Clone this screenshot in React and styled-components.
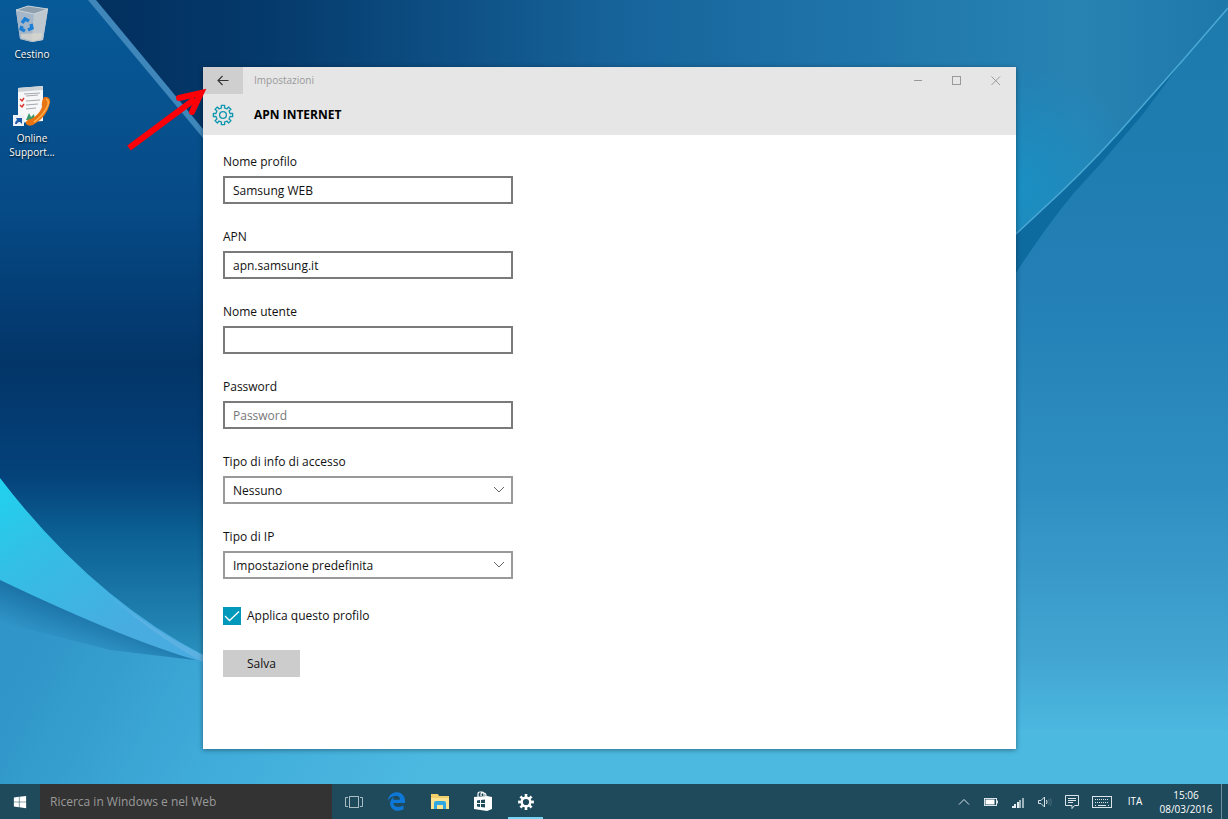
import { useState } from "react";
import styled, { createGlobalStyle } from "styled-components";
import { FaEdgeLegacy, FaWindows } from "react-icons/fa";

const GlobalStyle = createGlobalStyle`
  * {
    box-sizing: border-box;
  }
  body {
    margin: 0;
    overflow: hidden;
  }
  body, button, input, select {
    font-family: "Open Sans", "Noto Sans", sans-serif;
    font-size: 12px;
  }
`;

// closed outline of a cog centred on 0,0
const gearPath = (teeth, outer, inner) => {
  const step = (Math.PI * 2) / teeth;
  const points = [];
  for (let i = 0; i < teeth; i++) {
    const a = i * step - Math.PI / 2;
    [
      [-0.27, inner],
      [-0.22, outer],
      [0.22, outer],
      [0.27, inner],
    ].forEach(([t, r]) => {
      const x = Math.cos(a + t * step) * r;
      const y = Math.sin(a + t * step) * r;
      points.push(`${x.toFixed(2)} ${y.toFixed(2)}`);
    });
  }
  return `M${points.join("L")}Z`;
};

const Background = () => (
  <Wallpaper viewBox="0 0 1228 819" preserveAspectRatio="none" aria-hidden="true">
    <defs>
      <linearGradient id="sky" x1="0" y1="0" x2="1" y2="0">
        <stop offset="0.08" stopColor="#02305f" />
        <stop offset="0.22" stopColor="#053a6c" />
        <stop offset="0.5" stopColor="#16639a" />
        <stop offset="0.7" stopColor="#1f75a9" />
        <stop offset="0.88" stopColor="#2883b3" />
        <stop offset="1" stopColor="#1e78aa" />
      </linearGradient>
      <linearGradient id="left" x1="0" y1="0" x2="0" y2="1">
        <stop offset="0" stopColor="#075a98" />
        <stop offset="0.3" stopColor="#064a86" />
        <stop offset="0.52" stopColor="#033568" />
        <stop offset="0.68" stopColor="#04427a" />
        <stop offset="0.76" stopColor="#0b5f93" />
        <stop offset="0.88" stopColor="#1f7fae" />
        <stop offset="1" stopColor="#35a5cf" />
      </linearGradient>
      <linearGradient id="right" gradientUnits="userSpaceOnUse" x1="0" y1="0" x2="0" y2="819">
        <stop offset="0" stopColor="#1d7aab" />
        <stop offset="0.35" stopColor="#237fb5" />
        <stop offset="0.6" stopColor="#2f8fc2" />
        <stop offset="0.8" stopColor="#42a5d1" />
        <stop offset="0.9" stopColor="#4cb9e1" />
      </linearGradient>
      <radialGradient id="glow" gradientUnits="userSpaceOnUse" cx="1010" cy="190" r="130">
        <stop offset="0" stopColor="#1a90c4" />
        <stop offset="1" stopColor="#1a90c4" stopOpacity="0" />
      </radialGradient>
      <linearGradient id="wing" gradientUnits="userSpaceOnUse" x1="0" y1="480" x2="110" y2="640">
        <stop offset="0" stopColor="#20d2ee" />
        <stop offset="0.4" stopColor="#33bfe6" />
        <stop offset="1" stopColor="#48ace0" />
      </linearGradient>
      <linearGradient id="floor" gradientUnits="userSpaceOnUse" x1="60" y1="590" x2="420" y2="784">
        <stop offset="0" stopColor="#3095c8" />
        <stop offset="0.5" stopColor="#3fabd9" />
        <stop offset="1" stopColor="#4cb9e1" />
      </linearGradient>
      <linearGradient id="shade" gradientUnits="userSpaceOnUse" x1="60" y1="603" x2="46" y2="640">
        <stop offset="0" stopColor="#14679c" stopOpacity="0.75" />
        <stop offset="1" stopColor="#14679c" stopOpacity="0" />
      </linearGradient>
    </defs>
    <rect width="1228" height="819" fill="url(#sky)" />
    <path d="M0 0H90L203 137L420 330V700H0Z" fill="url(#left)" />
    <path d="M88 0H96L203 129V138Z" fill="#3f87bb" />
    <path d="M880 0H1228V8L1183 60L1137 112Q1100 155 1060 193L1016 234H880Z" fill="url(#glow)" />
    <path d="M1228 8V819H700V560L1016 234L1060 193Q1100 155 1137 112Z" fill="url(#right)" />
    <path d="M1016 234L1060 193Q1100 155 1137 112L1183 60L1143 114L1103 161L1073 194Q1045 228 1016 273Z" fill="#0e6ba0" />
    <path d="M1016 234L1060 193Q1100 155 1137 112L1183 60L1228 8" fill="none" stroke="#4aa9d4" strokeWidth="1.5" />
    <path d="M0 579L203 661L420 730H1228V819H0Z" fill="url(#floor)" />
    <path d="M0 579L203 661L110 650L0 622Z" fill="url(#shade)" />
    <path d="M0 478Q90 596 203 655V662Q130 642 0 580Z" fill="url(#wing)" />
    <path d="M100 588Q150 630 203 655V662Q160 640 100 588Z" fill="#6bb4e4" opacity="0.6" />
  </Wallpaper>
);

const RecycleBinIcon = () => (
  <svg width="36" height="38" viewBox="0 0 36 38" aria-hidden="true">
    <path d="M2 5L14 1L34 4L29 35L18 37L6 34Z" fill="#b9c6d2" />
    <path d="M2 5L20 9L18 37L6 34Z" fill="#a4b6c7" />
    <path d="M20 9L34 4L29 35L18 37Z" fill="#c0c8cf" />
    <path d="M2 5L14 1L34 4L20 9Z" fill="#8fa0ae" stroke="#d3dce3" strokeWidth="0.8" />
    <path d="M7 29L28 28L27 34L18 36L7 33Z" fill="#dcd9cc" opacity="0.7" />
    <g fill="none" stroke="#1c7fd6" strokeWidth="3.4">
      <path d="M8 18L11 14L15 16" />
      <path d="M17 19L18 23L14 25" />
      <path d="M11 26L7 24L8 21" />
    </g>
  </svg>
);

const SupportIcon = () => (
  <svg width="40" height="42" viewBox="0 0 40 42" aria-hidden="true">
    <path d="M6 3L31 1L31 36L6 38Z" fill="#f6f7f8" />
    <path d="M6 3L31 1L31 5L6 7Z" fill="#cdd2d6" />
    <g stroke="#a5a9ae" strokeWidth="1">
      <path d="M12 9L28 8M14 11L26 10M14 16L28 15M14 20L26 19M14 24L24 23" />
    </g>
    <path d="M8 14L10 16L12 13M8 20L10 22L12 19" fill="none" stroke="#dc2f2a" strokeWidth="1.4" />
    <path d="M14 35L17 28L19 32L22 29L23 35Z" fill="#3a9a6b" />
    <path
      d="M32 12Q39 11 38 18Q35 31 24 38Q18 43 14 39Q13 35 19 34Q27 30 30 22Q29 16 32 12Z"
      fill="#e87412"
    />
    <path d="M34 14Q37 15 36 20Q32 30 22 37" fill="none" stroke="#ffae4a" strokeWidth="1.6" />
    <rect x="1" y="30" width="11" height="11" fill="#eef2f7" />
    <path d="M3 39Q3 36 5 35L4 33H10V39L8 37Q5 37 5 39Z" fill="#1e5aa8" />
  </svg>
);

const GearOutline = () => (
  <svg width="22" height="22" viewBox="-11 -11 22 22" aria-hidden="true">
    <g fill="none" stroke="#1097b0" strokeWidth="1.3" strokeLinejoin="round">
      <path d={gearPath(8, 9.8, 7.2)} />
      <circle r="3.4" />
    </g>
  </svg>
);

const GearSolid = () => (
  <svg width="18" height="18" viewBox="-9 -9 18 18" aria-hidden="true">
    <path d={gearPath(8, 8, 5.6)} fill="#fff" />
    <circle r="3.1" fill="#1f4a5b" />
  </svg>
);

const TaskViewIcon = () => (
  <svg width="18" height="14" viewBox="0 0 18 14" fill="none" stroke="#a9bbc3" aria-hidden="true">
    <rect x="4.5" y="1.5" width="9" height="11" />
    <path d="M3 2.500H.5V11.500H3M15 2.500H17.500V11.500H15" />
  </svg>
);

const ExplorerIcon = () => (
  <svg width="20" height="17" viewBox="0 0 20 17" aria-hidden="true">
    <path d="M1 1H8L9 3H19V16H1Z" fill="#f0cf6a" />
    <path d="M1 5H19V16H1Z" fill="#fbe38f" />
    <path d="M4 16V10Q4 8 6 8H14Q16 8 16 10V16H13V12H7V16Z" fill="#2fa9e0" />
  </svg>
);

const StoreIcon = () => (
  <svg width="20" height="21" viewBox="0 0 20 21" aria-hidden="true">
    <path d="M5 6V3Q5 1 7 1H9Q11 1 11 3V5M8 5V3Q9 1 11 2Q13 2 13 5" fill="none" stroke="#fff" strokeWidth="1.2" />
    <path d="M1 6L14 5L19 6V18L14 20L1 18Z" fill="#fff" />
    <path d="M4 9.400L7 9V12H4ZM8 9L12 8.500V12H8ZM4 13H7V16L4 15.600ZM8 13H12V16.500L8 16Z" fill="#1f4a5b" />
  </svg>
);

const TrayIcon = ({ width = 16, children }) => (
  <svg width={width} height="16" viewBox={`0 0 ${width} 16`} fill="none" stroke="#dbe5e9" aria-hidden="true">
    {children}
  </svg>
);

const trayItems = [
  {
    label: "Mostra icone nascoste",
    icon: (
      <TrayIcon>
        <path d="M3 10.500L8 5.500L13 10.500" />
      </TrayIcon>
    ),
  },
  {
    label: "Batteria",
    icon: (
      <TrayIcon>
        <rect x="1.500" y="4.500" width="12" height="7" />
        <rect x="3" y="6" width="8" height="4" fill="#fff" stroke="#fff" />
        <path d="M14.500 6.500V9.500" />
      </TrayIcon>
    ),
  },
  {
    label: "Rete",
    icon: (
      <TrayIcon>
        <g stroke="none" fill="#e6eef1">
          <rect x="2" y="12" width="2" height="2" />
          <rect x="4" y="10" width="2" height="4" />
          <rect x="7" y="8" width="2" height="6" />
        </g>
        <g stroke="none" fill="#9fb3bc">
          <rect x="9" y="6" width="2" height="8" />
          <rect x="12" y="4" width="2" height="10" />
        </g>
      </TrayIcon>
    ),
  },
  {
    label: "Volume",
    icon: (
      <TrayIcon>
        <path d="M1.500 6.500H4L7.500 3V13L4 9.500H1.500Z" />
        <path d="M9.500 6Q10.500 8 9.500 10" />
        <path d="M11.500 5Q13 8 11.500 11M13.500 4Q15 8 13.500 12" stroke="#476a78" />
      </TrayIcon>
    ),
  },
  {
    label: "Centro notifiche",
    icon: (
      <TrayIcon>
        <path d="M1.500 1.500H14.500V11.500H10.500L8 14.500V11.500H1.500ZM4 4.500H12M4 6.500H12M4 8.500H9" />
      </TrayIcon>
    ),
  },
  {
    label: "Tastiera virtuale",
    icon: (
      <TrayIcon width={20}>
        <rect x=".5" y="2.500" width="19" height="11" />
        <path d="M3 5.500H17M3 8.500H17" strokeDasharray="1 1" />
        <path d="M3 11.500H4M6 11.500H14M16 11.500H17" />
      </TrayIcon>
    ),
  },
];

const apps = [
  { label: "Visualizzazione attività", icon: <TaskViewIcon /> },
  { label: "Microsoft Edge", icon: <FaEdgeLegacy size={19} color="#0f78d7" /> },
  { label: "Esplora file", icon: <ExplorerIcon /> },
  { label: "Store", icon: <StoreIcon /> },
  { label: "Impostazioni", icon: <GearSolid />, active: true },
];

const SelectField = ({ id, label, options }) => (
  <Field>
    <Label htmlFor={id}>{label}</Label>
    <SelectBox>
      <Select id={id}>
        {options.map((option) => (
          <option key={option}>{option}</option>
        ))}
      </Select>
      <Chevron width="12" height="8" viewBox="0 0 12 8" aria-hidden="true">
        <path d="M1 1L6 6L11 1" fill="none" stroke="#666" />
      </Chevron>
    </SelectBox>
  </Field>
);

const ApnForm = () => {
  const [form, setForm] = useState({
    profile: "Samsung WEB",
    apn: "apn.samsung.it",
    user: "",
    password: "",
  });
  const [apply, setApply] = useState(true);
  const change = (e) => setForm({ ...form, [e.target.name]: e.target.value });

  return (
    <Form onSubmit={(e) => e.preventDefault()}>
      <Field>
        <Label htmlFor="profile">Nome profilo</Label>
        <Input id="profile" name="profile" value={form.profile} onChange={change} />
      </Field>
      <Field>
        <Label htmlFor="apn">APN</Label>
        <Input id="apn" name="apn" value={form.apn} onChange={change} />
      </Field>
      <Field>
        <Label htmlFor="user">Nome utente</Label>
        <Input id="user" name="user" value={form.user} onChange={change} />
      </Field>
      <Field>
        <Label htmlFor="password">Password</Label>
        <Input
          id="password"
          name="password"
          type="password"
          placeholder="Password"
          value={form.password}
          onChange={change}
        />
      </Field>
      <SelectField id="auth" label="Tipo di info di accesso" options={["Nessuno", "PAP", "CHAP"]} />
      <SelectField id="ip" label="Tipo di IP" options={["Impostazione predefinita", "IPv4", "IPv6"]} />
      <CheckRow>
        <Checkbox type="checkbox" checked={apply} onChange={(e) => setApply(e.target.checked)} />
        {apply && (
          <Tick width="18" height="18" viewBox="0 0 18 18" aria-hidden="true">
            <path d="M2 9L6.500 13.500L16 4.500" fill="none" stroke="#fff" strokeWidth="1.3" />
          </Tick>
        )}
        Applica questo profilo
      </CheckRow>
      <SaveButton type="submit">Salva</SaveButton>
    </Form>
  );
};

const App = () => {
  return (
    <Desktop>
      <GlobalStyle />
      <Background />
      <Workspace>
        <Shortcuts>
          <Shortcut href="#cestino">
            <RecycleBinIcon />
            <span>Cestino</span>
          </Shortcut>
          <Shortcut href="#support">
            <SupportIcon />
            <span>Online Support...</span>
          </Shortcut>
        </Shortcuts>
        <Window>
          <Header>
            <TitleBar>
              <BackButton aria-label="Indietro">
                <svg width="12" height="12" viewBox="0 0 12 12" fill="none" stroke="#333" strokeWidth="1.100">
                  <path d="M11.500 5.500H1M5.500 1L1 5.500L5.500 10" />
                </svg>
              </BackButton>
              <AppName>Impostazioni</AppName>
              <WindowButton aria-label="Riduci a icona">
                <svg width="10" height="10" viewBox="0 0 10 10" stroke="#999">
                  <path d="M1 4.500H9" />
                </svg>
              </WindowButton>
              <WindowButton aria-label="Ingrandisci">
                <svg width="10" height="10" viewBox="0 0 10 10" fill="none" stroke="#999">
                  <rect x=".5" y=".5" width="8" height="8" />
                </svg>
              </WindowButton>
              <WindowButton aria-label="Chiudi">
                <svg width="10" height="10" viewBox="0 0 10 10" stroke="#999">
                  <path d="M.5 .5L9 9M9 .5L.5 9" />
                </svg>
              </WindowButton>
            </TitleBar>
            <Heading>
              <GearOutline />
              <h1>APN INTERNET</h1>
            </Heading>
          </Header>
          <ApnForm />
        </Window>
        <Pointer width="82" height="64" viewBox="0 0 82 64" aria-hidden="true">
          <path d="M4 60L70 11" stroke="#fb0007" strokeWidth="6" />
          <path
            d="M54 10L76 5L67 24"
            fill="none"
            stroke="#fb0007"
            strokeWidth="6"
            strokeLinecap="round"
          />
        </Pointer>
      </Workspace>
      <Taskbar>
        <StartButton aria-label="Start">
          <FaWindows size={14} color="#fff" />
        </StartButton>
        <Search type="search" placeholder="Ricerca in Windows e nel Web" aria-label="Ricerca" />
        <Apps>
          {apps.map((app) => (
            <AppButton key={app.label} aria-label={app.label} $active={app.active}>
              {app.icon}
            </AppButton>
          ))}
        </Apps>
        <Tray>
          {trayItems.map((item) => (
            <TrayButton key={item.label} aria-label={item.label}>
              {item.icon}
            </TrayButton>
          ))}
          <Language>ITA</Language>
          <Clock>
            <time>15:06</time>
            <time>08/03/2016</time>
          </Clock>
          <ShowDesktop aria-label="Mostra desktop" />
        </Tray>
      </Taskbar>
    </Desktop>
  );
};

const Desktop = styled.div`
  position: relative;
  display: flex;
  flex-direction: column;
  min-height: 100vh;
  isolation: isolate;
`;
const Wallpaper = styled.svg`
  position: absolute;
  inset: 0;
  width: 100%;
  height: 100%;
  z-index: -1;
`;
const Workspace = styled.div`
  position: relative;
  flex: 1;
  display: flex;
`;
const Shortcuts = styled.nav`
  display: flex;
  flex-direction: column;
  gap: 24px;
  width: 64px;
  padding-top: 5px;
`;
const Shortcut = styled.a`
  display: flex;
  flex-direction: column;
  align-items: center;
  gap: 4px;
  padding: 0 8px;
  color: white;
  font-size: 10px;
  line-height: 14px;
  text-align: center;
  text-decoration: none;
  text-shadow: 0 1px 2px black;
`;
const Window = styled.main`
  flex: 1;
  display: flex;
  flex-direction: column;
  margin: 67px 212px 35px 139px;
  background-color: white;
  box-shadow: 0 1px 5px rgba(0, 0, 0, 0.4);
`;
const Header = styled.header`
  background-color: #e6e6e6;
`;
const TitleBar = styled.div`
  display: flex;
  height: 27px;
  padding-right: 1px;
`;
const BackButton = styled.button`
  display: flex;
  align-items: center;
  justify-content: center;
  width: 40px;
  padding: 0;
  border: none;
  background-color: #cfcfcf;
`;
const AppName = styled.span`
  flex: 1;
  padding-left: 11px;
  color: #999;
  font-size: 10px;
  line-height: 27px;
`;
const WindowButton = styled.button`
  display: flex;
  align-items: center;
  justify-content: center;
  width: 39px;
  padding: 0;
  border: none;
  background: none;
`;
const Heading = styled.div`
  display: flex;
  align-items: center;
  gap: 20px;
  height: 41px;
  padding: 0 9px 0 9px;
  h1 {
    margin: 0;
    color: black;
    font-size: 12px;
    font-weight: 700;
  }
`;
const Form = styled.form`
  display: flex;
  flex-direction: column;
  align-items: flex-start;
  padding: 17px 20px 40px;
  color: #111;
`;
const Field = styled.div`
  display: flex;
  flex-direction: column;
  gap: 4px;
  width: 290px;
  max-width: 100%;
  margin-bottom: 23px;
`;
const Label = styled.label`
  line-height: 20px;
`;
const Input = styled.input`
  width: 100%;
  height: 28px;
  padding: 0 8px;
  border: 2px solid #7a7a7a;
  border-radius: 0;
  background-color: white;
  color: #111;
  &::placeholder {
    color: #767676;
    opacity: 1;
  }
`;
const SelectBox = styled.div`
  position: relative;
  display: flex;
`;
const Select = styled.select`
  appearance: none;
  width: 100%;
  height: 28px;
  padding: 0 28px 0 8px;
  border: 2px solid #999;
  border-radius: 0;
  background-color: white;
  color: #111;
`;
const Chevron = styled.svg`
  position: absolute;
  top: 10px;
  right: 8px;
  pointer-events: none;
`;
const CheckRow = styled.label`
  position: relative;
  display: flex;
  align-items: center;
  gap: 6px;
  margin-top: 5px;
  line-height: 18px;
`;
const Checkbox = styled.input`
  appearance: none;
  width: 18px;
  height: 18px;
  margin: 0;
  border: 2px solid #7a7a7a;
  &:checked {
    border-color: #0099bc;
    background-color: #0099bc;
  }
`;
const Tick = styled.svg`
  position: absolute;
  left: 0;
  pointer-events: none;
`;
const SaveButton = styled.button`
  width: 77px;
  height: 27px;
  margin-top: 25px;
  padding: 0;
  border: none;
  background-color: #ccc;
  color: #111;
`;
const Pointer = styled.svg`
  position: absolute;
  top: 88px;
  left: 125px;
  pointer-events: none;
`;
const Taskbar = styled.footer`
  display: flex;
  height: 35px;
  background-color: #1f4a5b;
  button {
    display: flex;
    align-items: center;
    justify-content: center;
    padding: 0;
    border: none;
    background: none;
  }
`;
const StartButton = styled.button`
  width: 40px;
`;
const Search = styled.input`
  width: 292px;
  padding: 0 10px;
  border: none;
  border-radius: 0;
  background-color: #333;
  color: white;
  &::placeholder {
    color: #9a9a9a;
    opacity: 1;
  }
`;
const Apps = styled.div`
  display: flex;
`;
const AppButton = styled.button`
  position: relative;
  width: 43px;
  &::after {
    content: "";
    position: absolute;
    right: 4px;
    bottom: 0;
    left: 4px;
    height: 2px;
    background-color: ${(props) => (props.$active ? "#76d3f2" : "transparent")};
  }
`;
const Tray = styled.div`
  display: flex;
  margin-left: auto;
  color: white;
`;
const TrayButton = styled.button`
  width: 27px;
  &:nth-last-of-type(2) {
    width: 34px;
  }
`;
const Language = styled.span`
  width: 32px;
  font-size: 10px;
  line-height: 35px;
  text-align: center;
`;
const Clock = styled.div`
  display: flex;
  flex-direction: column;
  justify-content: center;
  width: 70px;
  font-size: 10px;
  line-height: 14px;
  text-align: center;
`;
const ShowDesktop = styled.button`
  width: 7px;
  && {
    border-left: 1px solid #6f8f9c;
  }
`;

export default App;
